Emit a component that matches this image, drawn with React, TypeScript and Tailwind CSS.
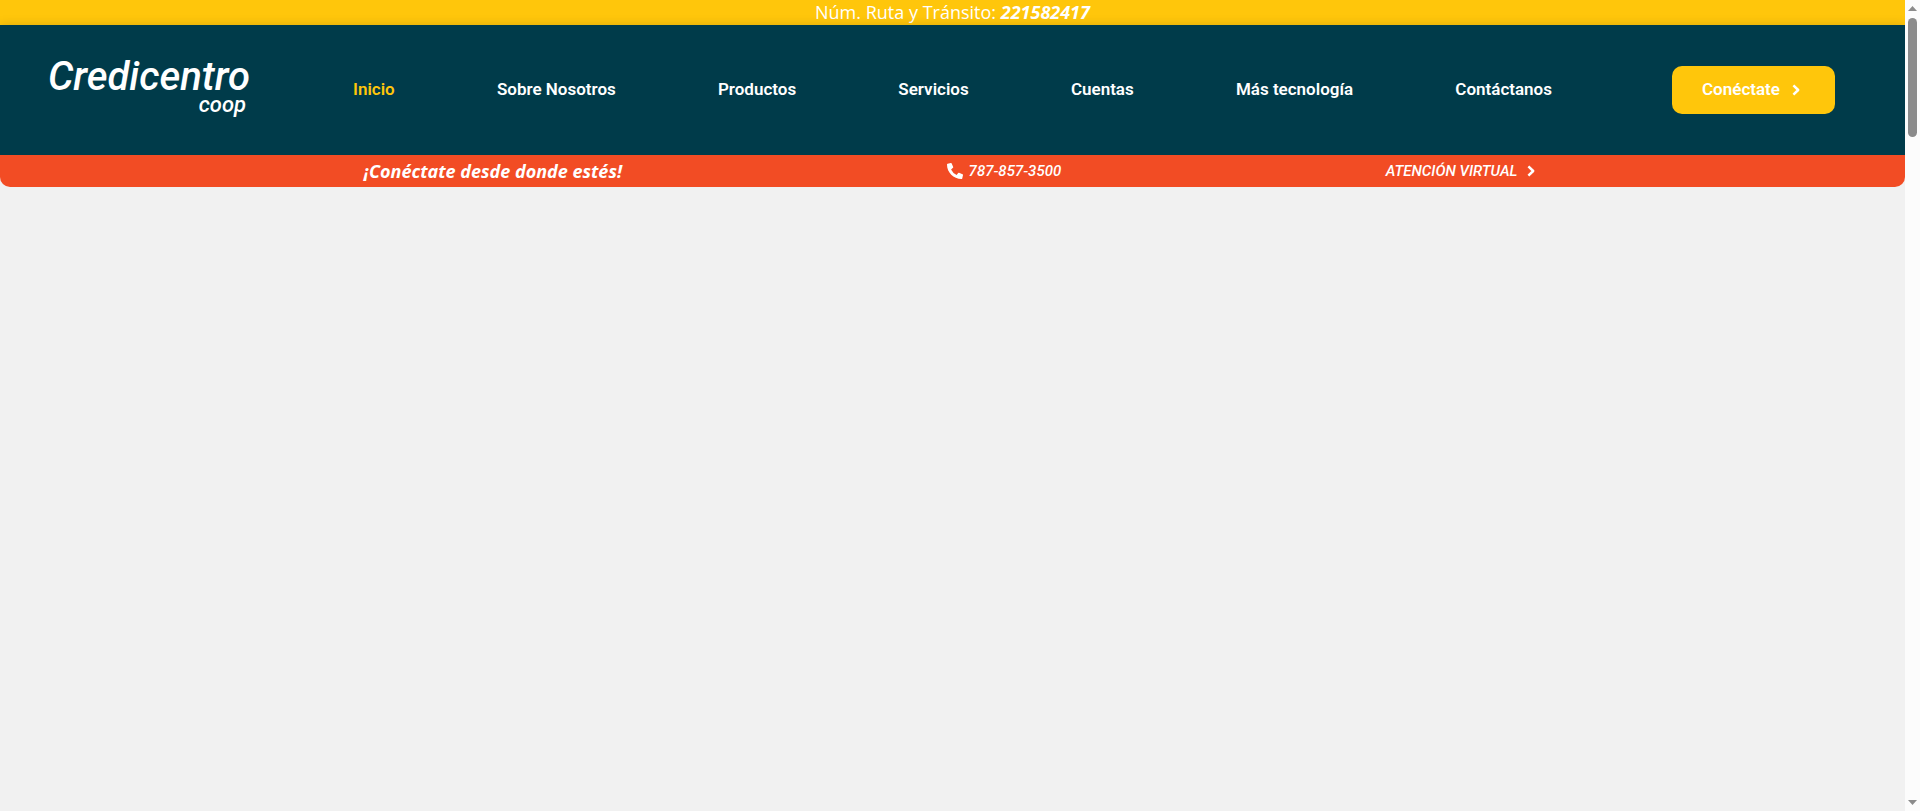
import React from 'react';
import { FaPhoneAlt } from 'react-icons/fa';

const navItems = [
  { label: 'Inicio', href: '#inicio', active: true },
  { label: 'Sobre Nosotros', href: '#nosotros' },
  { label: 'Productos', href: '#productos' },
  { label: 'Servicios', href: '#servicios' },
  { label: 'Cuentas', href: '#cuentas' },
  { label: 'Más tecnología', href: '#tecnologia' },
  { label: 'Contáctanos', href: '#contactanos' },
];

const Chevron: React.FC<{ className?: string }> = ({ className = '' }) => (
  <svg
    className={`shrink-0 ${className}`}
    viewBox="0 0 8 12"
    fill="none"
    stroke="currentColor"
    strokeWidth={2.5}
    strokeLinejoin="round"
  >
    <path d="M1.4 1.4 6.2 6l-4.8 4.6" />
  </svg>
);

const RouteBar: React.FC = () => (
  <div className="flex h-[25px] justify-center bg-[#ffc60b] font-['Open_Sans',sans-serif] text-lg leading-6 font-medium text-white">
    <p>
      Núm. Ruta y Tránsito: <em className="font-bold">221582417</em>
    </p>
  </div>
);

const Logo: React.FC = () => (
  <a href="#inicio" className="flex w-[202px] shrink-0 flex-col pb-1.5 text-white italic">
    <span className="text-[40px] leading-9">Credicentro</span>
    <span className="self-end pr-1 text-[22px] leading-5">coop</span>
  </a>
);

const Header: React.FC = () => (
  <header className="relative flex h-[130px] items-center bg-[#003b4a] pr-[70px] pl-12 font-['Roboto',sans-serif] text-[17px] font-medium text-white shadow-[0_0_10px_rgba(0,0,0,0.15)]">
    <Logo />
    <nav className="mr-[120px] ml-[103px] flex flex-1 items-center justify-between font-semibold">
      {navItems.map((item) => (
        <a
          key={item.label}
          href={item.href}
          className={`whitespace-nowrap ${item.active ? 'text-[#ffc60b]' : 'text-white'}`}
        >
          {item.label}
        </a>
      ))}
    </nav>
    <button
      type="button"
      className="flex h-12 w-[163px] shrink-0 items-center gap-3 rounded-[10px] bg-[#ffc60b] pl-[30px] font-semibold"
    >
      Conéctate
      <Chevron className="h-3 w-2" />
    </button>
  </header>
);

const ContactBar: React.FC = () => (
  <div className="relative flex h-8 items-center justify-between rounded-b-[10px] bg-[#f24c24] pr-[19.4%] pl-[19.1%] font-['Roboto',sans-serif] text-[15px] font-medium text-white italic">
    <p className="font-['Open_Sans',sans-serif] text-lg leading-6 font-bold">
      ¡Conéctate desde donde estés!
    </p>
    <a href="tel:787-857-3500" className="flex items-center gap-1.5">
      <FaPhoneAlt className="size-4" />
      787-857-3500
    </a>
    <a href="#virtual" className="flex items-center gap-[10px]">
      ATENCIÓN VIRTUAL
      <Chevron className="h-3 w-2" />
    </a>
  </div>
);

const ScrollRail: React.FC = () => (
  <div className="sticky top-0 flex h-screen w-[15px] shrink-0 flex-col items-center bg-[#fcfcfc] pt-1.5 pb-1.5">
    <svg className="h-[5px] w-[9px]" viewBox="0 0 9 5" fill="#8b8b8b">
      <path d="M4.5 0 9 5H0z" />
    </svg>
    <div className="mt-[7px] h-[119px] w-[9px] rounded-full bg-[#8b8b8b]" />
    <svg className="mt-auto h-[5px] w-[9px]" viewBox="0 0 9 5" fill="#8b8b8b">
      <path d="M0 0h9L4.5 5z" />
    </svg>
  </div>
);

export default function App() {
  return (
    <div className="flex min-h-screen bg-[#f1f1f1]">
      <main className="min-w-0 flex-1">
        <RouteBar />
        <Header />
        <ContactBar />
      </main>
      <ScrollRail />
    </div>
  );
}
